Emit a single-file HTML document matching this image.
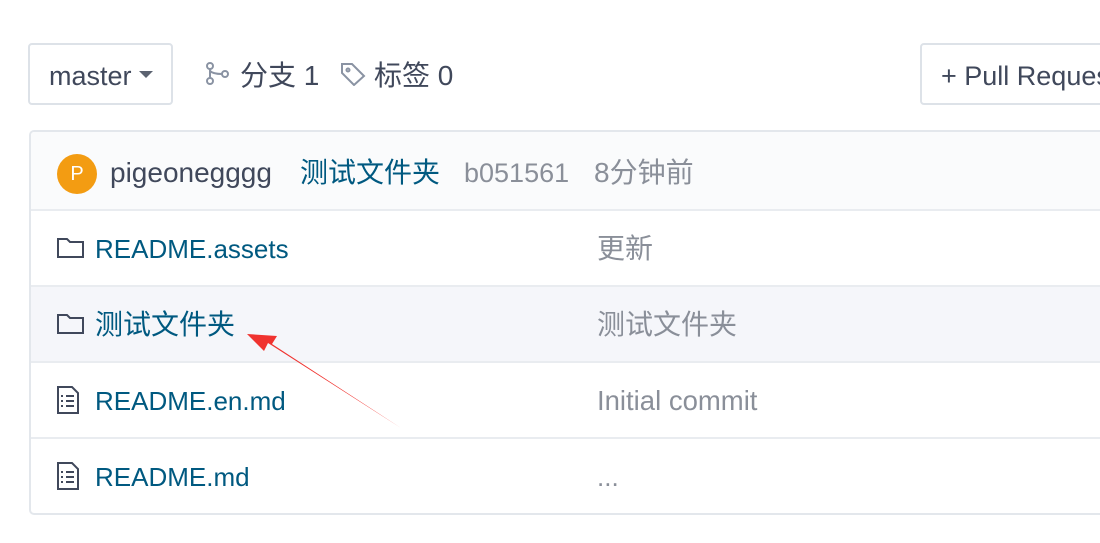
<!DOCTYPE html>
<html><head><meta charset="utf-8"><style>
*{box-sizing:border-box;margin:0;padding:0}
body{width:1100px;height:543px;background:#fff;font-family:"Liberation Sans","Noto Sans CJK SC",sans-serif;position:relative;overflow:hidden;color:#40485b}
.abs{position:absolute}
.btn{border:2px solid #dde2e8;border-radius:4px;height:62px;top:43px;background:#fff}
.t{font-size:26px;line-height:30px;white-space:nowrap}
.c{font-size:28px}
.box{left:29px;top:130px;width:1100px;height:385px;border:2px solid #e3e7ec;border-radius:5px;overflow:hidden}
.row{position:absolute;left:0;right:0;height:76px;border-top:2px solid #e9ecf0}
.link{color:#005980}
.gray{color:#8a8f99}
</style></head><body>
<div class="abs btn" style="left:28px;width:145px"></div>
<div class="abs t" style="left:49px;top:61px;font-size:27px">master</div>
<svg class="abs" style="left:139px;top:71px" width="14" height="8"><path d="M0 0H14L7 7Z" fill="#5b6270"/></svg>
<svg class="abs" style="left:205px;top:62px" width="26" height="24" fill="none" stroke="#8a93a3" stroke-width="2"><circle cx="5" cy="4" r="3"/><circle cx="5" cy="19" r="3"/><circle cx="20" cy="12" r="3"/><path d="M5 7V16M5 9Q8 12 17 12"/></svg>
<div class="abs t c" style="left:240px;top:61px">分支 1</div>
<svg class="abs" style="left:340px;top:62px" width="26" height="24" fill="none" stroke="#8a93a3" stroke-width="2"><path d="M2 2H12L24 14 14 23 2 11Z"/><circle cx="8" cy="8" r="1.5"/></svg>
<div class="abs t c" style="left:374px;top:61px">标签 0</div>
<div class="abs btn" style="left:920px;width:200px"></div>
<div class="abs t" style="left:941px;top:61px;font-size:27px">+ Pull Request</div>
<div class="abs box">
 <div class="abs" style="left:0;top:0;right:0;height:78px;background:#fafbfc"></div>
 <div class="abs" style="left:26px;top:22px;width:40px;height:40px;border-radius:50%;background:#f39c12;color:#fff;font-size:20px;text-align:center;line-height:40px">P</div>
 <div class="abs t c" style="left:79px;top:26px">pigeonegggg</div>
 <div class="abs t link c" style="left:269px;top:26px">测试文件夹</div>
 <div class="abs t gray" style="left:433px;top:26px;font-size:27px">b051561</div>
 <div class="abs t gray c" style="left:563px;top:26px">8分钟前</div>
 <div class="row" style="top:77px"></div>
 <div class="row" style="top:153px;background:#f5f6fa"></div>
 <div class="row" style="top:229px"></div>
 <div class="row" style="top:305px"></div>
 <svg class="abs" style="left:25px;top:105px" width="30" height="22" fill="none" stroke="#40485b" stroke-width="2"><path d="M2 2H11L14 5H27V20H2Z"/></svg>
 <div class="abs t link" style="left:64px;top:102px">README.assets</div>
 <div class="abs t gray c" style="left:566px;top:102px">更新</div>
 <svg class="abs" style="left:25px;top:181px" width="30" height="22" fill="none" stroke="#40485b" stroke-width="2"><path d="M2 2H11L14 5H27V20H2Z"/></svg>
 <div class="abs t link c" style="left:64px;top:178px">测试文件夹</div>
 <div class="abs t gray c" style="left:566px;top:178px">测试文件夹</div>
 <svg class="abs" style="left:25px;top:254px" width="24" height="28" fill="none" stroke="#40485b" stroke-width="2"><path d="M2 1H16L22 7V27H2Z"/><path d="M10 10H18M10 15H18M10 20H18M5 10H7M5 15H7M5 20H7"/></svg>
 <div class="abs t link" style="left:64px;top:254px">README.en.md</div>
 <div class="abs t gray" style="left:566px;top:254px;font-size:27.5px">Initial commit</div>
 <svg class="abs" style="left:25px;top:330px" width="24" height="28" fill="none" stroke="#40485b" stroke-width="2"><path d="M2 1H16L22 7V27H2Z"/><path d="M10 10H18M10 15H18M10 20H18M5 10H7M5 15H7M5 20H7"/></svg>
 <div class="abs t link" style="left:64px;top:330px">README.md</div>
 <div class="abs t gray" style="left:566px;top:330px">...</div>
</div>
<svg class="abs" style="left:0;top:0" width="1100" height="543"><path d="M401 428L268 343 264 351 247 334 277 336 272 344Z" fill="#f0332f"/></svg>
</body></html>
